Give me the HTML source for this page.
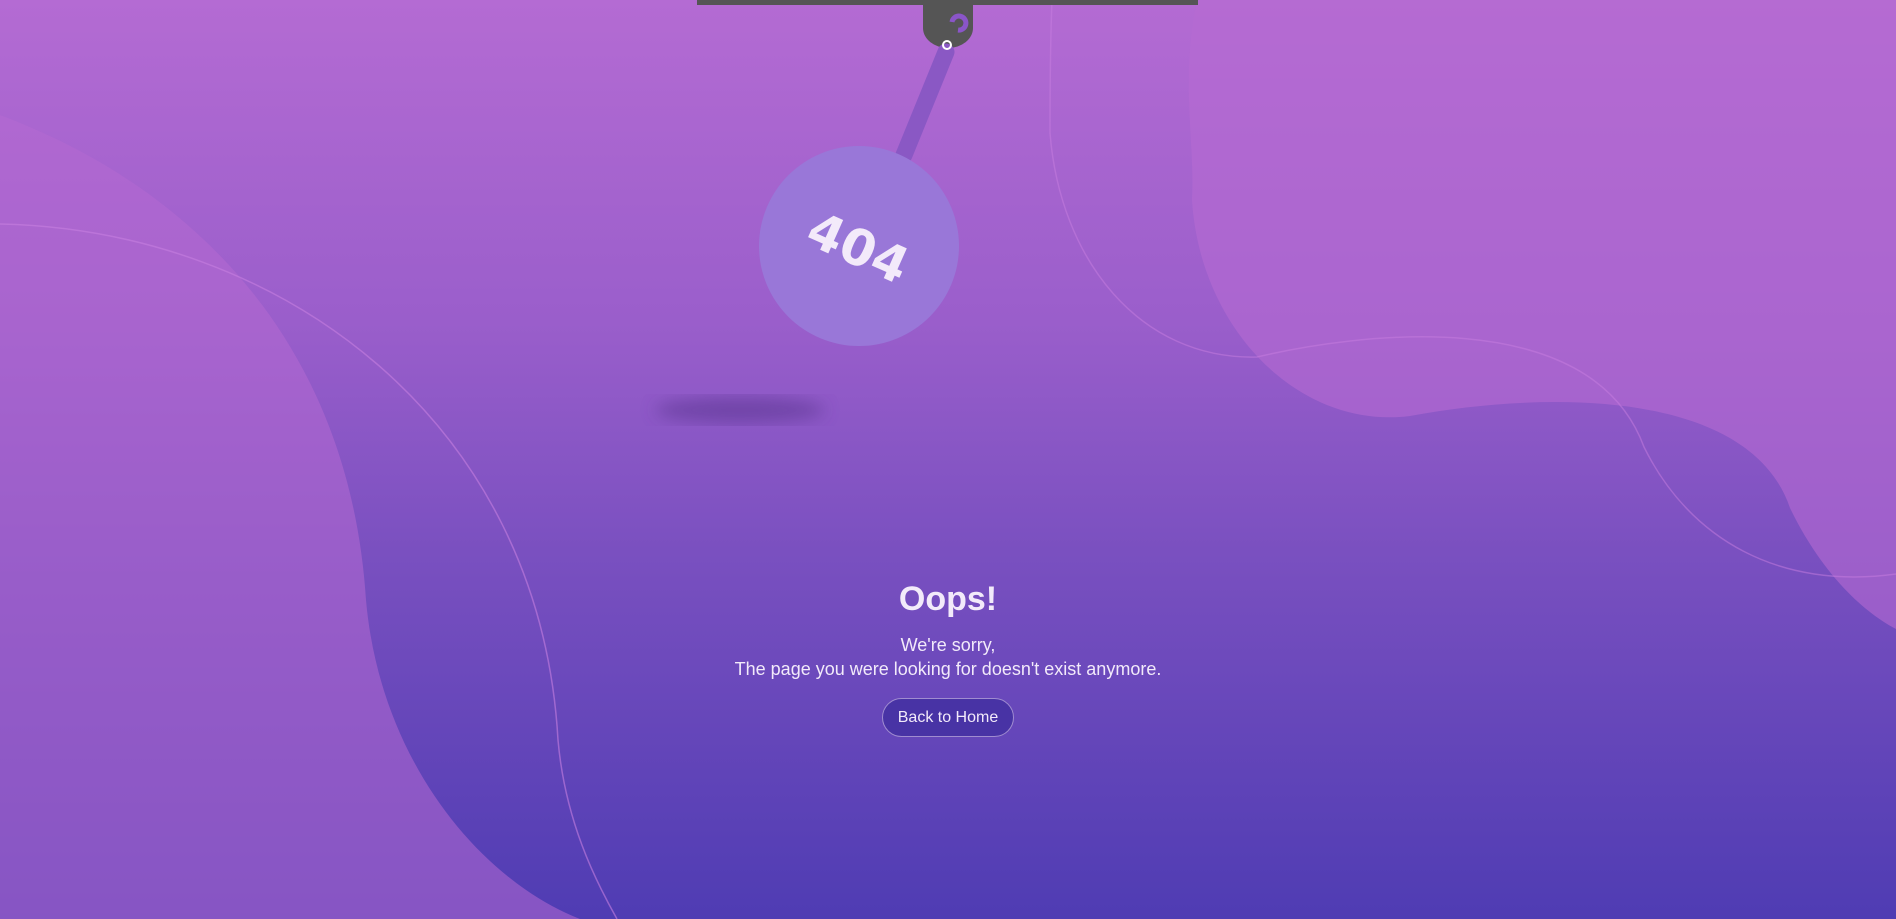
<!DOCTYPE html>
<html><head><meta charset="utf-8"><style>
html,body{margin:0;padding:0;width:1896px;height:919px;overflow:hidden}
body{background:linear-gradient(180deg,#b46bd3 0%,#9a5ecb 35%,#7a50c0 60%,#4f3cb3 100%);font-family:"Liberation Sans",sans-serif;position:relative}
svg{position:absolute;left:0;top:0}
.t{position:absolute;left:0;width:1896px;text-align:center;color:#f2eafa}
</style></head><body>
<svg width="1896" height="919" viewBox="0 0 1896 919">
<defs><filter id="b"><feGaussianBlur stdDeviation="8"/></filter></defs>
<path d="M0,115 C200,190 350,350 366,600 C380,760 480,880 580,919 L0,919 Z" fill="#b56ad2" opacity="0.55"/>
<path d="M1197,0 C1180,80 1195,140 1192,200 C1200,330 1300,430 1410,416 C1550,390 1750,390 1790,508 C1820,570 1860,610 1896,629 L1896,0 Z" fill="#b56ad2" opacity="0.6"/>
<path d="M0,224 C280,230 540,420 558,740 C565,820 595,880 617,919" fill="none" stroke="#c77ee0" stroke-width="1.5" opacity="0.6"/>
<path d="M1052,0 C1050,50 1050,90 1050,133 C1060,260 1140,360 1257,357 C1350,335 1590,300 1644,447 C1690,540 1780,590 1896,574" fill="none" stroke="#c77ee0" stroke-width="1.5" opacity="0.5"/>
<ellipse cx="740" cy="410" rx="85" ry="13" fill="#5a3590" opacity="0.55" filter="url(#b)"/>
<rect x="697" y="0" width="501" height="5" fill="#555"/>
<path d="M923,0 H973 V28 A25,20 0 0 1 923,28 Z" fill="#555"/>
<path d="M952,22 a7,7 0 1 1 6,8" fill="none" stroke="#8a55c8" stroke-width="5"/>
<line x1="946" y1="52" x2="904" y2="155" stroke="#8a58c4" stroke-width="17" stroke-linecap="round"/>
<circle cx="947" cy="45" r="4" fill="none" stroke="#fff" stroke-width="2"/>
<circle cx="859" cy="246" r="100" fill="#9977d8"/>
<text x="858" y="265" text-anchor="middle" font-family="DejaVu Sans" font-weight="bold" font-size="50" fill="#f3eafa" transform="rotate(24 858 248)">404</text>
</svg>
<div class="t" style="top:580px;font-size:34px;font-weight:bold">Oops!</div>
<div class="t" style="top:633px;font-size:18px;line-height:24px">We're sorry,<br>The page you were looking for doesn't exist anymore.</div>
<div style="position:absolute;left:882px;top:698px;width:130px;height:37px;border:1px solid #a08cd0;border-radius:20px;background:#4833a5;color:#f2eafa;font-size:16px;line-height:37px;text-align:center">Back to Home</div>
</body></html>
